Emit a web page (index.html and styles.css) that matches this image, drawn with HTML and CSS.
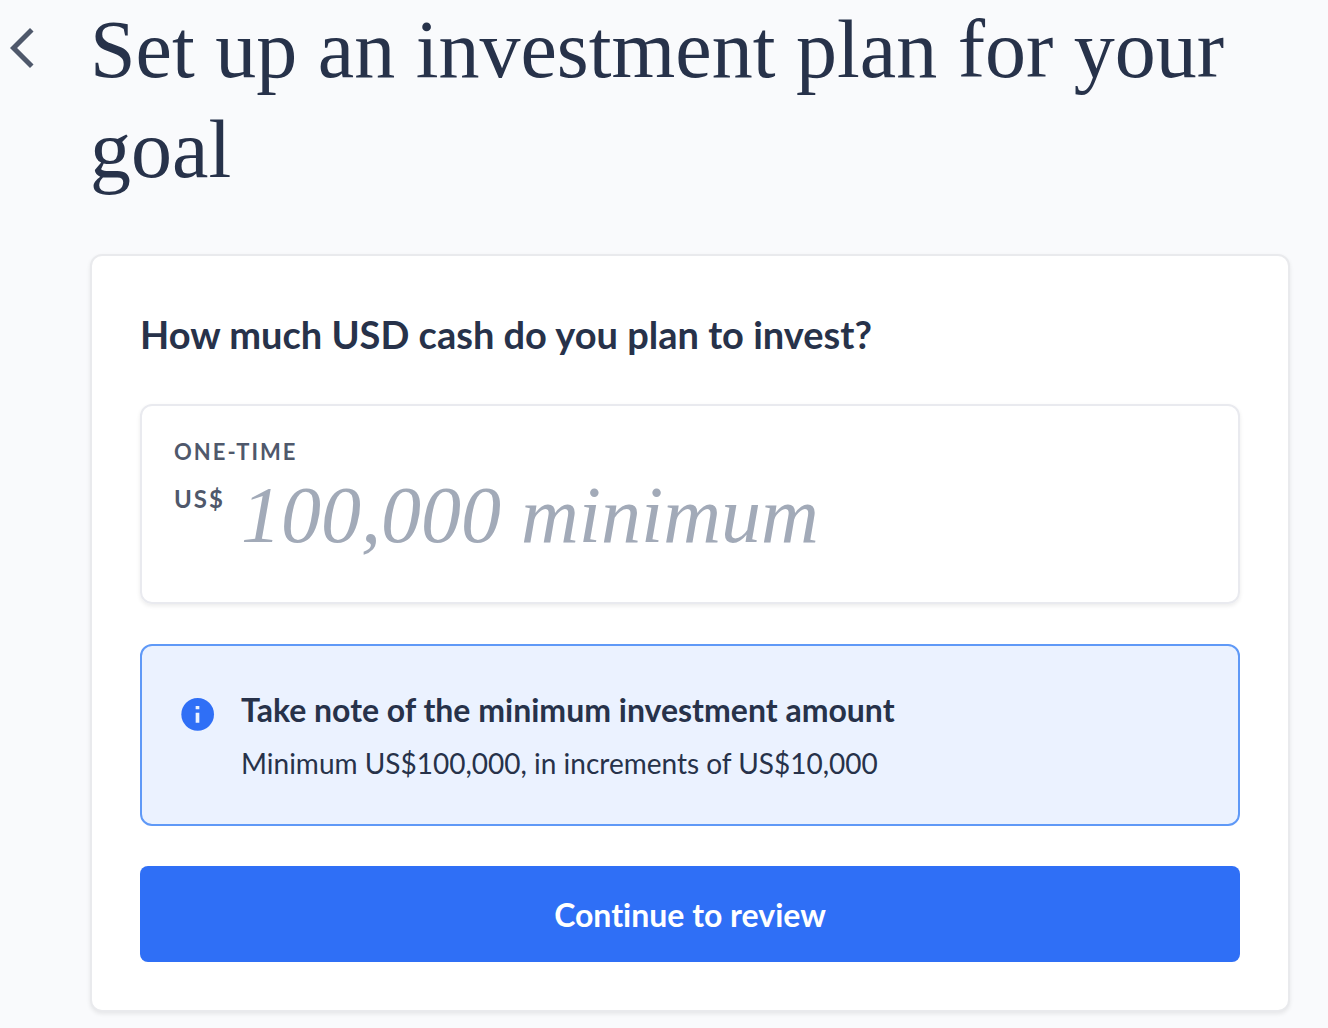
FILE: index.html
```html
<!DOCTYPE html>
<html lang="en">
<head>
    <meta charset="UTF-8">
    <meta name="viewport" content="width=device-width, initial-scale=1.0">
    <title>Set up an investment plan</title>
    <link rel="stylesheet" href="styles.css">
</head>
<body>
    <div class="page">
        <button class="back" type="button" aria-label="Back">
            <svg viewBox="6 2 12 20" fill="currentColor">
                <path d="M17.77 3.77L16 2 6 12l10 10 1.77-1.77L9.54 12z"/>
            </svg>
        </button>
        <main class="content">
            <h1>Set up an investment plan for your goal</h1>
            <form class="card">
                <h2>How much USD cash do you plan to invest?</h2>
                <div class="amount-box">
                    <label for="amount">ONE-TIME</label>
                    <div class="amount-row">
                        <span class="currency">US$</span>
                        <input type="text" id="amount" inputmode="numeric" placeholder="100,000 minimum">
                    </div>
                </div>
                <div class="notice">
                    <svg class="notice-icon" viewBox="0 0 24 24">
                        <circle cx="11.8" cy="12.2" r="9.8" fill="#2f6ff6"/>
                        <path d="M10.6 7.2h2.2v2h-2.2zM10.6 11.2h2.2v6h-2.2z" fill="#ebf2ff"/>
                    </svg>
                    <div class="notice-text">
                        <h3>Take note of the minimum investment amount</h3>
                        <p>Minimum US$100,000, in increments of US$10,000</p>
                    </div>
                </div>
                <button class="submit" type="submit">Continue to review</button>
            </form>
        </main>
    </div>
</body>
</html>
```
FILE: styles.css
```css
* {
    box-sizing: border-box;
}
body {
    margin: 0;
    background-color: #f9fafc;
    color: #27324a;
    font-family: Lato, sans-serif;
    font-variant-ligatures: none;
}
h1, h2, h3, p {
    margin: 0;
}
.page {
    display: flex;
    align-items: flex-start;
    gap: 56px;
    padding: 0 38px 16px 10px;
}
.back {
    flex: none;
    width: 24px;
    height: 40px;
    margin-top: 28px;
    padding: 0;
    border: 0;
    background: none;
    color: #4f586b;
    cursor: pointer;
}
.back svg {
    display: block;
    width: 24px;
    height: 40px;
}
.content {
    flex: 1;
    min-width: 0;
}
h1 {
    margin-bottom: 54px;
    font-family: "Liberation Serif", serif;
    font-size: 82px;
    font-weight: 400;
    line-height: 100px;
}

/* Card with the form */
.card {
    display: flex;
    flex-direction: column;
    gap: 40px;
    padding: 48px;
    background-color: #fff;
    border: 2px solid #e9eaed;
    border-radius: 12px;
    box-shadow: 0 2px 4px rgba(0, 0, 0, 0.08);
}
h2 {
    font-size: 38px;
    font-weight: 700;
    line-height: 60px;
}
.amount-box {
    padding: 32px 32px 46px;
    border: 2px solid #e9eaef;
    border-radius: 12px;
    box-shadow: 0 2px 4px rgba(0, 0, 0, 0.08);
}
.amount-box label {
    display: block;
    color: #4f586b;
    font-size: 22px;
    font-weight: 700;
    line-height: 28px;
    letter-spacing: 2px;
}
.amount-row {
    display: flex;
    align-items: flex-start;
    gap: 16px;
    padding-top: 8px;
}
.currency {
    color: #4f586b;
    font-size: 24px;
    font-weight: 700;
    line-height: 50px;
    letter-spacing: 2px;
}
.amount-row input {
    flex: 1;
    min-width: 0;
    height: 82px;
    padding: 0;
    border: 0;
    outline: 0;
    background: none;
    color: #27324a;
    font-family: "Liberation Serif", serif;
    font-size: 80px;
    line-height: 82px;
}
.amount-row input::placeholder {
    color: #a2aab8;
    font-style: italic;
    opacity: 1;
}

/* Info message */
.notice {
    display: flex;
    align-items: flex-start;
    gap: 23px;
    padding: 40px 36px;
    background-color: #ebf2ff;
    border: 2px solid #5f99f7;
    border-radius: 12px;
}
.notice-icon {
    flex: none;
    width: 40px;
    height: 40px;
    margin-top: 8px;
}
.notice-text {
    display: flex;
    flex-direction: column;
    gap: 8px;
}
h3 {
    font-size: 32px;
    font-weight: 700;
    line-height: 48px;
}
.notice-text p {
    font-size: 28px;
    line-height: 42px;
}
.submit {
    height: 96px;
    border: 0;
    border-radius: 8px;
    background-color: #2f6ff6;
    color: #fff;
    font-family: inherit;
    font-size: 32px;
    font-weight: 700;
    font-variant-ligatures: none;
    cursor: pointer;
}
```
